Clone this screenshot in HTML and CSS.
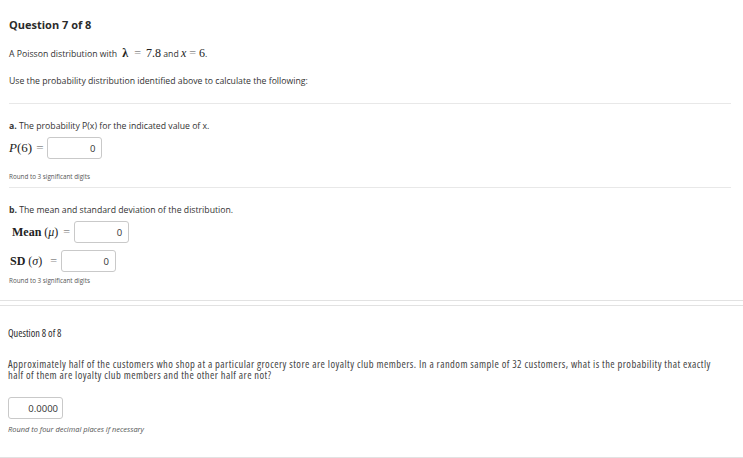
FILE: index.html
```html
<!DOCTYPE html>
<html lang="en">
<head>
<meta charset="utf-8">
<title>Questions</title>
<link rel="stylesheet" href="styles.css">
</head>
<body>
<div class="page">
  <section class="q q7">
    <h2 class="q-title">Question 7 of 8</h2>
    <p class="stem">A Poisson distribution with <span class="math lam">λ</span><span class="math eq">=</span><span class="math">7.8</span> and <span class="math"><i>x</i></span><span class="math eq eq-x">=</span><span class="math">6</span>.</p>
    <p class="stem stem-2">Use the probability distribution identified above to calculate the following:</p>

    <div class="part part-a">
      <p class="part-q"><b>a.</b> The probability P(x) for the indicated value of x.</p>
      <div class="ans-row row-p">
        <span class="label math"><i>P</i>(6)<span class="eq">=</span></span>
        <span class="input">0</span>
      </div>
      <p class="hint">Round to 3 significant digits</p>
    </div>

    <div class="part part-b">
      <p class="part-q"><b>b.</b> The mean and standard deviation of the distribution.</p>
      <div class="ans-row row-mean">
        <span class="label math"><span class="bold-m">Mean</span> (<i>μ</i>)<span class="eq">=</span></span>
        <span class="input">0</span>
      </div>
      <div class="ans-row row-sd">
        <span class="label math"><span class="bold-m">SD</span> (<i>σ</i>)<span class="eq">=</span></span>
        <span class="input">0</span>
      </div>
      <p class="hint">Round to 3 significant digits</p>
    </div>
  </section>

  <section class="q q8">
    <h2 class="q-title cond">Question 8 of 8</h2>
    <p class="body cond">Approximately half of the customers who shop at a particular grocery store are loyalty club members. In a random sample of 32 customers, what is the probability that exactly half of them are loyalty club members and the other half are not?</p>
    <div class="ans-row">
      <span class="input input-wide">0.0000</span>
    </div>
    <p class="hint hint-it">Round to four decimal places if necessary</p>
  </section>
</div>
</body>
</html>
```

FILE: styles.css
```css
* { box-sizing: border-box; }

html, body {
  margin: 0;
  padding: 0;
  background: #ffffff;
}

body {
  font-family: "Open Sans", "Liberation Sans", sans-serif;
  color: #333333;
  width: 743px;
}

p { margin: 0; }

.q {
  border-bottom: 1px solid #e2e2e2;
  padding-left: 9px;
}

.q7 {
  padding-top: 17px;
  padding-bottom: 15px;
}

.q8 {
  margin-top: 4px;
  border-top: 1px solid #e2e2e2;
  padding-top: 19px;
  padding-bottom: 24px;
  padding-left: 8px;
}

.q-title {
  margin: 0;
  font-size: 11px;
  font-weight: 700;
  line-height: 16px;
  color: #2b2b2b;
}

.stem {
  margin-top: 14px;
  font-size: 8.7px;
  line-height: 12px;
}

.stem-2 {
  margin-top: 15px;
  margin-bottom: 16px;
}

.math {
  font-family: "Liberation Serif", "DejaVu Serif", serif;
  font-size: 12px;
  color: #222;
}

.math i { font-style: italic; }

.lam {
  font-weight: 700;
  margin-left: 3px;
}

.eq {
  color: #8a8a8a;
  margin: 0 5px 0 6px;
}

.eq-x { margin: 0 3px 0 3px; }

.bold-m { font-weight: 700; }

.part {
  border-top: 1px solid #e8e8e8;
  margin-right: 12px;
  padding-top: 16px;
}

.part-a { padding-bottom: 6px; }

.part-q {
  font-size: 8.7px;
  line-height: 12px;
}

.part-q b { font-weight: 700; }

.ans-row {
  display: flex;
  align-items: center;
  gap: 0;
  height: 22px;
  margin-top: 5px;
}

.label { white-space: nowrap; }

.row-p .math { font-size: 13px; }
.row-p .eq { margin: 0 4px 0 4px; }

.row-mean .label { padding-left: 3px; }
.row-mean .eq { margin: 0 4px 0 5px; }

.row-sd { margin-top: 7px; }
.row-sd .label { padding-left: 1px; }
.row-sd .eq { margin: 0 4px 0 8px; }

.input {
  display: flex;
  align-items: center;
  justify-content: flex-end;
  width: 55px;
  height: 22px;
  border: 1px solid #c9c9c9;
  border-radius: 3px;
  padding-right: 6px;
  font-size: 9.5px;
  color: #333;
  background: #fff;
}

.hint {
  margin-top: 14px;
  font-size: 6.3px;
  line-height: 8px;
  color: #555;
}

.part-b .hint { margin-top: 5px; }

.cond {
  font-stretch: 75%;
}

.q8 .q-title {
  font-weight: 400;
  font-size: 10.3px;
}

.body {
  margin-top: 18px;
  font-size: 10.5px;
  letter-spacing: 0.45px;
  line-height: 11px;
  padding-right: 20px;
  color: #444;
}

.q8 .ans-row { margin-top: 16px; }

.input-wide {
  padding-right: 4px;
  font-size: 9.5px;
}

.hint-it {
  margin-top: 6px;
  font-style: italic;
  font-size: 7.45px;
}
```
